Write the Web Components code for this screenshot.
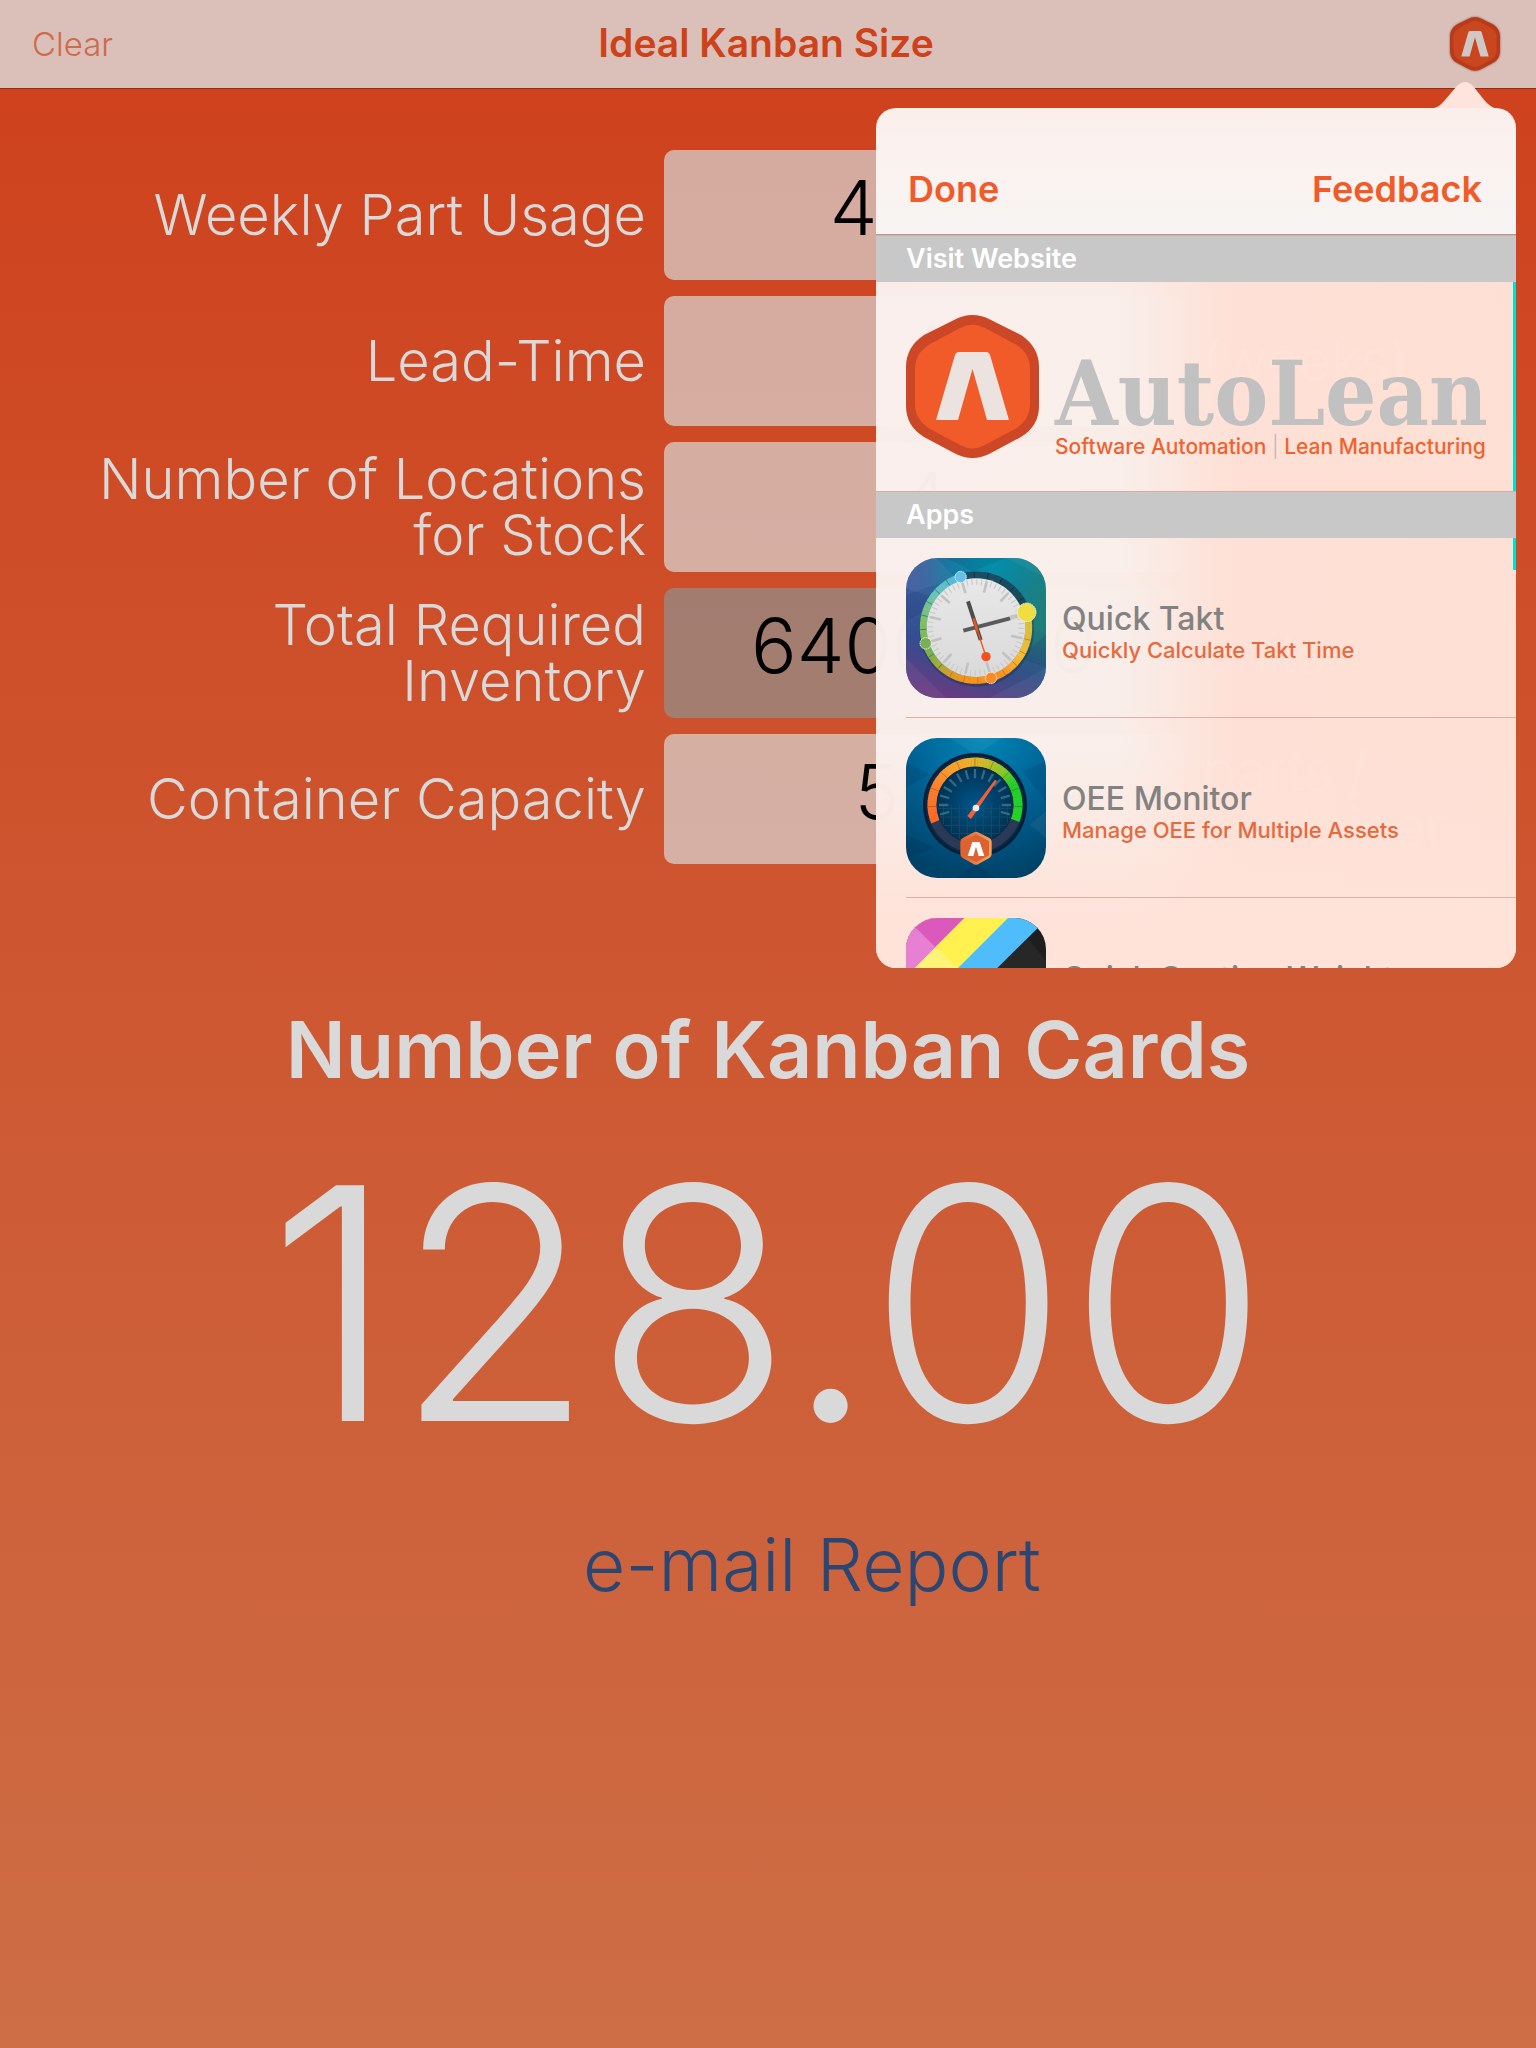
<!DOCTYPE html>
<html lang="en">
<head>
<meta charset="utf-8">
<meta name="viewport" content="width=device-width, initial-scale=1">
<title>Ideal Kanban Size</title>
<style>
  html, body { margin: 0; min-height: 100%; }
  body {
    font-family: Inter, "Open Sans", sans-serif;
    background: linear-gradient(#ce401b, #cd5731 48%, #cd6e46) no-repeat #cd6e46;
    min-height: 100vh;
  }
</style>
</head>
<body>
<kanban-app></kanban-app>

<script>
const define = (name, html, setup) => {
  const template = document.createElement('template');
  template.innerHTML = html;
  customElements.define(name, class extends HTMLElement {
    constructor() {
      super();
      this.attachShadow({ mode: 'open' }).append(template.content.cloneNode(true));
    }
    connectedCallback() {
      if (setup) setup(this, this.shadowRoot);
    }
  });
};

const mix = (stops, angle) => {
  let i = 1;
  while (i < stops.length - 1 && stops[i][0] < angle) i++;
  const [a0, c0] = stops[i - 1], [a1, c1] = stops[i];
  const t = Math.min(1, Math.max(0, (angle - a0) / (a1 - a0)));
  return `rgb(${c0.map((v, k) => Math.round(v + (c1[k] - v) * t))})`;
};
const polar = (cx, cy, r, deg) => {
  const a = deg * Math.PI / 180;
  return [(cx + r * Math.sin(a)).toFixed(1), (cy - r * Math.cos(a)).toFixed(1)];
};
const ring = (cx, cy, r, width, from, to, stops) => {
  let out = '';
  for (let a = from; a < to; a += 4) {
    const p = polar(cx, cy, r, a), q = polar(cx, cy, r, Math.min(to, a + 4.6));
    out += `<path d="M${p}A${r} ${r} 0 0 1 ${q}" fill="none" stroke="${mix(stops, a)}" stroke-width="${width}"/>`;
  }
  return out;
};
const ticks = (cx, cy, r0, r1, from, to, step, color, width) => {
  let d = '';
  for (let a = from; a < to; a += step) d += `M${polar(cx, cy, r0, a)}L${polar(cx, cy, r1, a)}`;
  return `<path d="${d}" stroke="${color}" stroke-width="${width}" fill="none"/>`;
};

/* Hexagonal brand mark, flat or embossed */
define('brand-mark', `
  <style>
    :host { display: block; width: 133px; }
    svg { display: block; width: 100%; overflow: visible; }
    .rim { fill: var(--rim, #cb4725); }
    .core { fill: var(--core, #f15a29); }
    .letter { fill: var(--letter, #ece3e1); }
  </style>
  <svg viewBox="0 0 133 143" aria-hidden="true">
    <path class="rim" d="M48 5Q66.500-5 85 5L115 20Q133 32 133 52V91Q133 111 115 122L85 138Q66.500 148 48 138L18 122Q0 111 0 91V52Q0 32 18 20Z"/>
    <path class="core" d="M54 13Q66.500 6 79 13L109 29Q124 38 124 54V89Q124 105 109 114L79 130Q66.500 137 54 130L24 114Q9 105 9 89V54Q9 38 24 29Z"/>
    <path class="letter" d="M30 105L49 40Q50 37 53 37H80Q83 37 84 40L103 105H81L66.500 54L52 105Z"/>
  </svg>`);

define('nav-bar', `
  <style>
    :host { display: block; background: #dac0b9; border-bottom: 1px solid #8f2c14; }
    header { display: grid; grid-template-columns: 1fr auto 1fr; align-items: center; height: 88px; padding: 0 36px 0 32px; }
    button { font: inherit; border: 0; padding: 0; background: none; cursor: pointer; }
    .clear { justify-self: start; font-size: 33px; font-weight: 300; color: #cf6a4b; }
    h1 { margin: 0; padding-bottom: 4px; font-size: 39px; font-weight: 600; color: #cd421a; }
    .info { justify-self: end; display: block; }
    brand-mark { width: 50px; --rim: #b83a1b; --core: #c9461e; --letter: #cfc8c5; filter: drop-shadow(0 0 1px #8c5a4c); }
  </style>
  <header>
    <button class="clear" type="button">Clear</button>
    <h1>Ideal Kanban Size</h1>
    <button class="info" type="button" aria-label="About AutoLean"><brand-mark></brand-mark></button>
  </header>`);

define('kanban-field', `
  <style>
    :host { display: grid; grid-template-columns: 646fr 520fr 334fr; column-gap: 18px; align-items: center; color: #d9d9d9; font-weight: 300; }
    label { text-align: right; font-size: 56px; line-height: 56px; white-space: pre-line; }
    input {
      box-sizing: border-box; width: 100%; height: 130px; padding: 0 0 16px; border: 0; border-radius: 10px;
      background: #d9d9d9b0; color: #000; font: inherit; font-size: 76px; text-align: center;
    }
    input[readonly] { background: #8c9494a8; }
    span { font-size: 56px; line-height: 56px; white-space: pre-line; }
  </style>
  <label for="value"></label>
  <input id="value" type="text" inputmode="decimal">
  <span></span>`, (host, root) => {
    const text = name => (host.getAttribute(name) || '').replace('|', '\n');
    root.querySelector('label').textContent = text('label');
    root.querySelector('span').textContent = text('unit');
    const input = root.querySelector('input');
    input.value = text('value');
    input.readOnly = host.hasAttribute('computed');
  });

define('kanban-result', `
  <style>
    :host { display: flex; flex-direction: column; align-items: center; color: #d9d9d9; }
    h2 { margin: 0; font-size: 79px; line-height: 96px; font-weight: 600; }
    output { margin-top: 8px; font-size: 324px; line-height: 396px; font-weight: 350; }
    button { margin: 16px 0 0; padding: 0 0 0 88px; border: 0; background: none; font: inherit; font-size: 73px; line-height: 96px; font-weight: 300; color: #2c4672; cursor: pointer; }
  </style>
  <h2>Number of Kanban Cards</h2>
  <output>128.00</output>
  <button type="button">e-mail Report</button>`);

define('takt-icon', `
  <style>:host { display: block; } svg { display: block; width: 100%; }</style>
  <svg viewBox="0 0 420 420" aria-hidden="true">
    <defs>
      <clipPath id="c"><rect width="420" height="420" rx="94"/></clipPath>
      <linearGradient id="b" x1="0" y1="0" x2="1" y2=".3"><stop offset="0" stop-color="#44599f"/><stop offset=".45" stop-color="#1f6a98"/><stop offset="1" stop-color="#1f7f78"/></linearGradient>
      <radialGradient id="t" cx=".6" cy="0" r=".5"><stop offset="0" stop-color="#0093ab"/><stop offset="1" stop-color="#0093ab" stop-opacity="0"/></radialGradient>
      <linearGradient id="p" x1=".3" y1="1" x2=".5" y2=".35"><stop offset="0" stop-color="#6a3a80"/><stop offset=".5" stop-color="#35478d" stop-opacity=".8"/><stop offset="1" stop-color="#35478d" stop-opacity="0"/></linearGradient>
      <linearGradient id="f" x1="0" y1="0" x2="0" y2="1"><stop offset="0" stop-color="#e8e8e8"/><stop offset="1" stop-color="#dadada"/></linearGradient>
    </defs>
    <g clip-path="url(#c)">
      <rect width="420" height="420" fill="url(#b)"/>
      <rect width="420" height="420" fill="url(#p)"/>
      <rect width="420" height="420" fill="url(#t)"/>
      <path d="M0 110L150 60 90 0H0zM0 300L120 420H0zM420 60L300 0H420zM250 420L420 330V420z" fill="#fff" opacity=".05"/>
      <path d="M0 190L110 130 0 90zM420 230L340 300 420 330zM120 0L200 40 300 0z" fill="#003" opacity=".09"/>
    </g>
    <circle cx="212" cy="214" r="172" fill="#06263c" opacity=".3"/>
    <g id="ring"></g>
    <circle cx="210" cy="209" r="148" fill="url(#f)"/>
    <g id="ticks"></g>
    <path d="M300 186L345 173" stroke="#c6c6c6" stroke-width="8"/>
    <path d="M186 130L224 246" stroke="#4c4c4c" stroke-width="12"/>
    <path d="M172 218L312 181" stroke="#5a5a5a" stroke-width="12"/>
    <path d="M203 181L214 220" stroke="#f4511e" stroke-width="7"/>
    <path d="M210 205L240 296" stroke="#f4511e" stroke-width="4"/>
    <circle cx="240" cy="296" r="14" fill="#f4511e"/>
    <g stroke="#fff" stroke-width="2.500" stroke-dasharray="5 2">
      <circle cx="164" cy="57" r="17" fill="#68c0e8"/>
      <circle cx="59" cy="256" r="17" fill="#77b055"/>
      <circle cx="255" cy="360" r="17" fill="#fb8a24"/>
      <circle cx="362" cy="163" r="28" fill="#efdd42"/>
    </g>
  </svg>`, (host, root) => {
    root.querySelector('#ring').innerHTML = ring(210, 209, 158, 21, 0, 360, [
      [0, [28, 78, 98]], [68, [26, 74, 88]], [72, [214, 190, 60]], [100, [222, 190, 62]], [120, [247, 190, 50]],
      [150, [248, 146, 28]], [190, [246, 150, 24]], [215, [190, 165, 50]], [240, [120, 178, 72]],
      [275, [130, 192, 100]], [305, [108, 198, 180]], [335, [82, 186, 220]], [343, [82, 186, 220]], [346, [28, 78, 98]]])
      + ticks(210, 209, 149, 168, -2, 84, 15, '#062d3d', 2.5)
      + ticks(210, 209, 149, 168, 103, 225, 15, '#e2681c', 2.5)
      + ticks(210, 209, 149, 168, 223, 344, 15, '#2f7f70', 2.5);
    root.querySelector('#ticks').innerHTML =
      ticks(210, 209, 128, 146, 1, 361, 6, '#cacaca', 3.5) + ticks(210, 209, 108, 142, 13, 373, 30, '#c2c2c2', 8);
  });

define('oee-icon', `
  <style>
    :host { display: block; } svg { display: block; width: 100%; }
  </style>
  <svg viewBox="0 0 420 420" aria-hidden="true">
    <defs>
      <clipPath id="c"><rect width="420" height="420" rx="94"/></clipPath>
      <radialGradient id="b" cx=".55" cy="0" r="1"><stop offset="0" stop-color="#0086b6"/><stop offset=".5" stop-color="#006396"/><stop offset="1" stop-color="#004268"/></radialGradient>
      <radialGradient id="f"><stop offset="0" stop-color="#00568c"/><stop offset="1" stop-color="#03304f"/></radialGradient>
      <linearGradient id="h" x1="0" y1="0" x2="1" y2="0"><stop offset="0" stop-color="#e0602e"/><stop offset="1" stop-color="#f9a35c"/></linearGradient>
      <clipPath id="d"><circle cx="207" cy="201" r="112"/></clipPath>
    </defs>
    <g clip-path="url(#c)">
      <rect width="420" height="420" fill="url(#b)"/>
      <path d="M0 70L70 110 0 150zM420 70L350 100 420 190zM0 290L90 330 0 360zM150 420L210 380 270 420z" fill="#001a40" opacity=".12"/>
      <path d="M130 0L210 50 290 0zM420 220L370 260 420 300z" fill="#fff" opacity=".05"/>
    </g>
    <circle cx="207" cy="201" r="156" fill="#052a46"/>
    <circle cx="207" cy="201" r="152" fill="none" stroke="#001a33" stroke-width="5"/>
    <circle cx="207" cy="201" r="129" fill="none" stroke="#2b3957" stroke-width="27"/>
    <g id="ring"></g>
    <circle cx="207" cy="201" r="115" fill="url(#f)"/>
    <path clip-path="url(#d)" d="M85 212H330M85 237H330M85 262H330M85 287H330M112 200V310M136 200V310M160 200V310M184 200V310M208 200V310M232 200V310M256 200V310M280 200V310M304 200V310" stroke="#1b5876" stroke-width="3" opacity=".6"/>
    <g id="ticks"></g>
    <path d="M184 234L195 243 273 129 267 125Z" fill="#f0603a"/>
    <circle cx="210" cy="210" r="10" fill="#e9edf8"/>
    <path d="M204 283Q210 280 216 283L250 300Q257 304 257 311V349Q257 356 250 360L216 379Q210 382 204 379L170 360Q163 356 163 349V311Q163 304 170 300Z" fill="url(#h)"/>
    <path d="M210 289L249 309V352L210 373 171 352V309Z" fill="#dd6232"/>
    <path d="M185 354L199 312H221L235 354H218L210 326 202 354Z" fill="#fff"/>
  </svg>`, (host, root) => {
    root.querySelector('#ring').innerHTML = ring(207, 201, 129, 27, -113, 111, [
      [-113, [255, 104, 36]], [-70, [255, 126, 44]], [-40, [252, 156, 44]], [-8, [240, 176, 42]],
      [15, [196, 188, 40]], [40, [130, 204, 40]], [58, [36, 206, 42]], [111, [40, 210, 38]]])
      + ticks(207, 201, 117, 141, -92, 110, 23, '#00000055', 2);
    root.querySelector('#ticks').innerHTML = ticks(207, 201, 80, 108, -105, 115, 15, '#2a6c8c', 7);
  });

define('coating-icon', `
  <style>:host { display: block; } svg { display: block; width: 100%; }</style>
  <svg viewBox="0 0 420 420" aria-hidden="true">
    <defs><clipPath id="c"><rect width="420" height="420" rx="94"/></clipPath></defs>
    <g clip-path="url(#c)">
      <rect width="420" height="420" fill="#1e1e1e"/>
      <path d="M275 149L366 60 420 130V190L275 150z" fill="#272727"/>
      <path d="M0 0H426L0 420z" fill="#4fbdfc"/>
      <path d="M0 0H306L0 306z" fill="#fff14f"/>
      <path d="M88 88L165 160H0z" fill="#fff478"/>
      <path d="M0 0H175L0 175z" fill="#db58bd"/>
      <path d="M0 0L88 88 0 175z" fill="#e780d2"/>
    </g>
  </svg>`);

define('section-bar', `
  <style>
    :host { display: block; background: #c8c8c8; border-top: 1px solid #ddaba1; }
    h3 { margin: 0; padding: 0 30px; font-size: 27px; line-height: 46px; font-weight: 600; color: #fff; }
  </style>
  <h3><slot></slot></h3>`);

define('app-row', `
  <style>
    :host { display: block; padding-left: 30px; }
    a { display: flex; align-items: center; gap: 16px; box-sizing: border-box; height: 180px; border-bottom: 1px solid #deb0a8; text-decoration: none; }
    .icon { flex: none; width: 140px; }
    .text { padding-top: 8px; }
    .title { margin: 0; font-size: 32px; line-height: 36px; font-weight: 500; color: #828282; }
    .sub { margin: 0; min-height: 26px; font-size: 22px; line-height: 26px; font-weight: 500; color: #e56a40; }
  </style>
  <a href="#">
    <div class="icon"><slot name="icon"></slot></div>
    <div class="text"><p class="title"><slot name="title"></slot></p><p class="sub"><slot></slot></p></div>
  </a>`);

define('auto-lean-logo', `
  <style>
    :host { display: block; }
    a { display: flex; align-items: center; gap: 16px; height: 209px; padding-left: 30px; text-decoration: none; }
    brand-mark { flex: none; }
    .words { padding-top: 40px; }
    .name { margin: 0; font-family: "DejaVu Serif Condensed", "DejaVu Serif", serif; font-size: 90px; line-height: 80px; font-weight: 700; color: #c1c1c1; }
    .tag { margin: 0; font-size: 21px; line-height: 28px; font-weight: 500; color: #f0622f; white-space: nowrap; }
    i { font-style: normal; font-weight: 300; color: #b9b9b9; }
  </style>
  <a href="#">
    <brand-mark></brand-mark>
    <div class="words"><p class="name">AutoLean</p><p class="tag">Software Automation <i>|</i> Lean Manufacturing</p></div>
  </a>`);

define('info-popover', `
  <style>
    :host { display: block; width: 640px; }
    .arrow { display: block; width: 72px; height: 27px; margin: 0 15px -1px auto; }
    .panel { display: flex; flex-direction: column; height: 860px; border-radius: 20px; overflow: hidden; }
    header {
      flex: none; display: flex; justify-content: space-between; align-items: center; box-sizing: border-box;
      height: 127px; padding: 35px 34px 0 32px; background: linear-gradient(#fbeeeb, #fbf2ef 40%, #f6f4f3); border-bottom: 1px solid #b09a96;
    }
    button { padding: 0; border: 0; background: none; font: inherit; font-size: 36px; line-height: 48px; font-weight: 600; color: #f15a29; cursor: pointer; }
    .list {
      flex: 1; min-height: 0; overflow: hidden;
      background:
        linear-gradient(#ffe2d800 0, #ffe2d800 70%, #ffe2d8f0 94%),
        linear-gradient(90deg, #faf0edfa, #faf0ecfa 38%, #ffe2d8fc 56%, #ffe1d6fc);
    }
    .scroller { position: absolute; right: 0; width: 3px; height: 209px; background: #00e0d3; }
    .scroller.rest { height: 32px; }
  </style>
  <svg class="arrow" viewBox="0 0 72 27" aria-hidden="true"><path d="M0 27C8 26 11 24 16 18L28 4Q36-4 44 4L56 19Q62 26 70 27Z" fill="#fee4dc"/></svg>
  <div class="panel">
    <header><button type="button">Done</button><button type="button">Feedback</button></header>
    <div class="list">
      <section-bar>Visit Website</section-bar>
      <div class="scroller"></div>
      <auto-lean-logo></auto-lean-logo>
      <section-bar>Apps</section-bar>
      <div class="scroller rest"></div>
      <app-row><takt-icon slot="icon"></takt-icon><span slot="title">Quick Takt</span>Quickly Calculate Takt Time</app-row>
      <app-row><oee-icon slot="icon"></oee-icon><span slot="title">OEE Monitor</span>Manage OEE for Multiple Assets</app-row>
      <app-row><coating-icon slot="icon"></coating-icon><span slot="title">Quick Coating Weight</span></app-row>
    </div>
  </div>`);

define('kanban-app', `
  <style>
    :host { display: block; position: relative; }
    form { display: flex; flex-direction: column; gap: 16px; padding-top: 61px; }
    kanban-result { margin-top: 137px; }
    info-popover { position: absolute; top: 82px; right: 20px; }
  </style>
  <nav-bar></nav-bar>
  <main>
    <form>
      <kanban-field label="Weekly Part Usage" value="4000"></kanban-field>
      <kanban-field label="Lead-Time" value="4" unit="(weeks)"></kanban-field>
      <kanban-field label="Number of Locations|for Stock" value="4"></kanban-field>
      <kanban-field label="Total Required|Inventory" value="64000.00" unit="units" computed></kanban-field>
      <kanban-field label="Container Capacity" value="500" unit="parts /|container"></kanban-field>
    </form>
    <kanban-result></kanban-result>
  </main>
  <info-popover></info-popover>`);
</script>
</body>
</html>
